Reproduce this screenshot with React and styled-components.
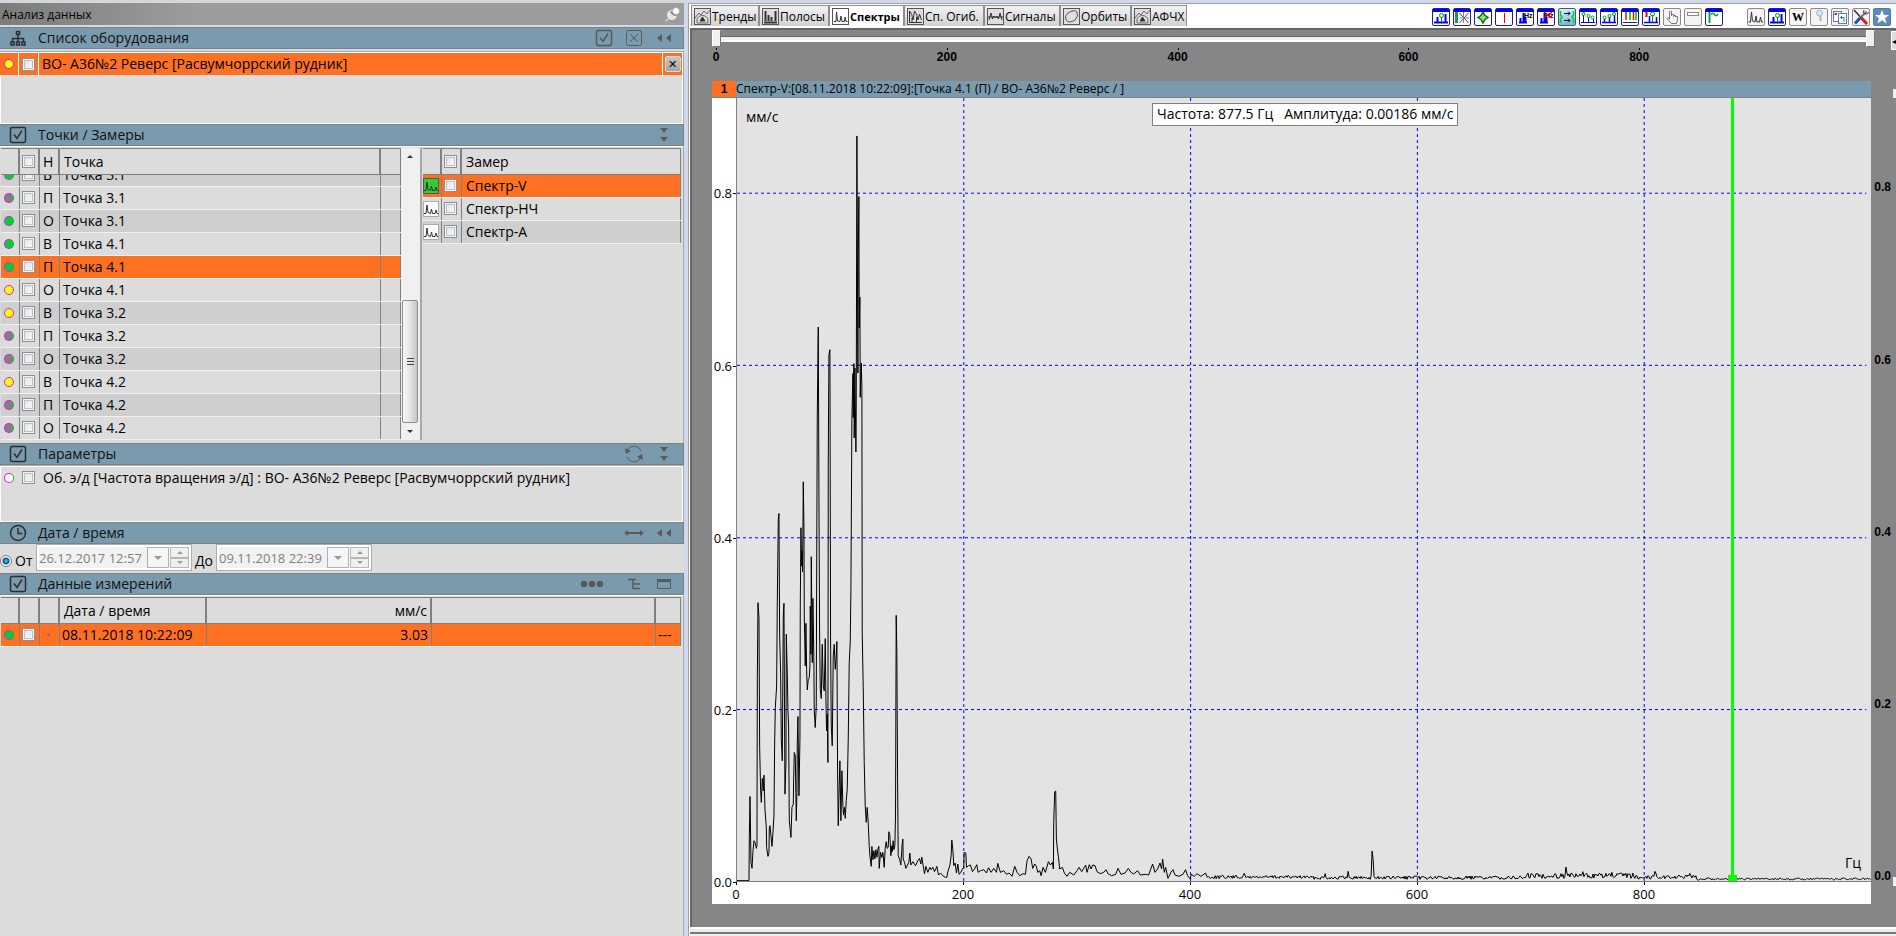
import React from 'react'
import styled, { createGlobalStyle, css } from 'styled-components'

const ORANGE = '#ff7122'
const BLUE = '#7a9bae'
const LINE = '#808080'
const PANEL = '#dcdcdc'
const STRIPE = '#cfcfcf'

const points = [
    { id: 1, dir: 'В', name: 'Точка 3.1', state: 'green' },
    { id: 2, dir: 'П', name: 'Точка 3.1', state: 'gray' },
    { id: 3, dir: 'О', name: 'Точка 3.1', state: 'green' },
    { id: 4, dir: 'В', name: 'Точка 4.1', state: 'green' },
    { id: 5, dir: 'П', name: 'Точка 4.1', state: 'green', active: true },
    { id: 6, dir: 'О', name: 'Точка 4.1', state: 'yellow' },
    { id: 7, dir: 'В', name: 'Точка 3.2', state: 'yellow' },
    { id: 8, dir: 'П', name: 'Точка 3.2', state: 'gray' },
    { id: 9, dir: 'О', name: 'Точка 3.2', state: 'gray' },
    { id: 10, dir: 'В', name: 'Точка 4.2', state: 'yellow' },
    { id: 11, dir: 'П', name: 'Точка 4.2', state: 'gray' },
    { id: 12, dir: 'О', name: 'Точка 4.2', state: 'gray' },
]

const measures = [
    { name: 'Спектр-V', active: true },
    { name: 'Спектр-НЧ' },
    { name: 'Спектр-А', striped: true },
]

const tabs = [
    { name: 'Тренды', icon: 'trend', width: 68 },
    { name: 'Полосы', icon: 'bars', width: 70 },
    { name: 'Спектры', icon: 'spectrum', width: 75, active: true },
    { name: 'Сп. Огиб.', icon: 'envelope', width: 80 },
    { name: 'Сигналы', icon: 'signal', width: 76 },
    { name: 'Орбиты', icon: 'orbit', width: 71 },
    { name: 'АФЧХ', icon: 'trend', width: 56 },
]

const tools = [
    'peak', 'cross', 'diamond', 'redline', 'hz', 'hzoff', 'harmonics', 'downs', 'ups',
    'bands', 'markers', 'hand', 'panel', 'flag',
]
const toolsRight = ['wave', 'peak', 'word', 'search', 'copy', 'wrench', 'star']

// x and y of every sample, the baseline is y = 1206
const samples = [
    109,1205, 145,1205, 146,1075, 148,952, 151,1150, 154,1168, 157,1115, 160,1085, 163,1090, 167,1108,
    169,1100, 170,600, 172,370, 175,415, 177,805, 180,935, 182,970, 185,898, 188,935, 190,888,
    193,990, 197,1045, 198,1105, 202,1132, 205,1120, 206,1050, 208,1040, 211,1070, 214,1102, 217,1060,
    220,1010, 222,800, 224,685, 228,620, 230,365, 233,120, 235,102, 237,465, 240,585, 242,780,
    245,845, 248,410, 250,372, 253,945, 256,850, 257,465, 260,585, 262,695, 264,740, 266,1025,
    271,1075, 274,985, 278,975, 279,905, 281,820, 284,830, 287,1025, 289,940, 290,795, 292,712,
    295,950, 298,780, 299,380, 301,145, 303,260, 305,215, 306,278, 308,7, 310,140, 311,410,
    314,560, 316,432, 318,570, 320,632, 323,600, 326,595, 328,560, 329,380, 331,525, 332,232,
    335,550, 337,357, 340,560, 341,695, 344,745, 347,680, 348,350, 350,-190, 353,-458, 355,40,
    357,455, 359,630, 362,658, 365,495, 368,620, 371,635, 374,478, 376,655, 378,755, 380,705,
    382,850, 383,-50, 385,-375, 388,-390, 390,485, 392,740, 395,800, 398,530, 401,495, 404,570,
    407,530, 409,487, 411,875, 413,1040, 416,920, 418,845, 421,1025, 424,875, 427,980, 429,1008,
    432,985, 434,1018, 437,965, 440,930, 443,780, 446,550, 449,490, 451,335, 454,-185, 457,-318,
    458,-185, 460,-348, 461,-125, 463,-335, 466,-83, 467,-207, 469,-1032, 472,-320, 473,-672, 475,-850,
    476,-455, 478,-548, 479,-247, 482,-350, 484,-280, 485,460, 488,625, 491,850, 494,980, 497,1030,
    500,985, 503,1030, 506,1100, 508,1130, 512,1162, 514,1102, 517,1142, 520,1115, 523,1140, 526,1112,
    529,1135, 532,1110, 535,1102, 536,1168, 540,1120, 544,1135, 547,1120, 551,1165, 554,1108, 557,1088,
    560,1108, 563,1105, 565,1058, 568,1070, 571,1130, 574,1100, 575,1118, 578,1085, 580,1112, 583,1100,
    585,1008, 587,408, 589,517, 591,870, 593,1130, 597,1140, 601,1158, 605,1095, 607,1080, 608,1140,
    612,1150, 616,1168, 620,1160, 625,1150, 628,1122, 631,1158, 637,1148, 645,1160, 652,1145, 657,1138,
    661,1155, 664,1134, 668,1160, 672,1184, 676,1162, 682,1180, 688,1165, 692,1172, 697,1165, 702,1178,
    706,1170, 709,1162, 714,1188, 720,1182, 727,1190, 735,1195, 739,1195, 742,1178, 748,1160, 752,1130,
    754,1083, 757,1110, 760,1160, 764,1152, 768,1182, 772,1155, 776,1186, 781,1180, 786,1170, 790,1165,
    791,1120, 796,1122, 798,1165, 804,1160, 810,1158, 816,1178, 822,1170, 829,1157, 833,1180, 840,1175,
    850,1172, 858,1182, 864,1166, 872,1180, 880,1168, 888,1180, 892,1153, 900,1180, 910,1175, 918,1186,
    926,1182, 935,1192, 943,1162, 950,1180, 958,1190, 968,1184, 975,1186, 980,1145, 986,1132, 992,1140,
    997,1168, 1003,1155, 1008,1162, 1012,1180, 1018,1175, 1022,1190, 1028,1165, 1035,1180, 1044,1148,
    1050,1158, 1056,1150, 1059,1170, 1060,1030, 1063,938, 1066,936, 1068,1080, 1071,1110, 1074,1132,
    1078,1170, 1086,1165, 1092,1182, 1100,1192, 1108,1180, 1120,1188, 1130,1175, 1136,1165, 1144,1178,
    1156,1158, 1160,1180, 1167,1157, 1172,1170, 1177,1158, 1184,1160, 1190,1178, 1200,1184, 1210,1180,
    1217,1172, 1224,1185, 1234,1190, 1246,1186, 1253,1168, 1262,1186, 1274,1182, 1284,1168, 1292,1180,
    1300,1185, 1312,1175, 1320,1188, 1335,1186, 1345,1188, 1357,1155, 1364,1180, 1372,1170, 1379,1152,
    1384,1170, 1387,1140, 1392,1180, 1396,1165, 1403,1198, 1412,1180, 1418,1172, 1424,1188, 1436,1192,
    1448,1186, 1456,1172, 1462,1190, 1470,1200, 1473,1186, 1482,1192, 1490,1184, 1502,1192, 1516,1182,
]

// the quiet part of the spectrum: floor level per range, and the few peaks that stand out
const floors = [
    [1830, 1194, 5],
    [2480, 1196, 5],
    [2800, 1190, 8],
    [2990, 1194, 6],
    [3514, 1200, 3],
]
const peaks = {
    1633: 1183, 1875: 1184, 1944: 1177, 2016: 1116, 2019: 1140, 2496: 1185, 2598: 1164, 2601: 1182,
    2649: 1178, 2736: 1180, 2865: 1177, 2868: 1182, 2971: 1183,
}

function buildPath () {
    let d = ''
    for (let i = 0; i < samples.length; i += 2) {
        d += `${ i ? 'L' : 'M' }${ samples[i] } ${ samples[i + 1] }`
    }
    let seed = 7
    for (let x = 1521; x < 3514; x += 3) {
        const [, level, swing] = floors.find(f => x < f[0])
        seed = (seed * 1103515245 + 12345) % 2147483648
        const noise = (seed / 2147483648 - 0.5) * 2 * swing
        const peak = peaks[x] || peaks[x + 1] || peaks[x + 2]
        d += `L${ x } ${ peak || Math.round(level + noise) }`
    }
    return d
}

const spectrumPath = buildPath()

/* ---------- icons ---------- */

function TabIcon ({ name }) {
    return (
        <svg width="17" height="17" viewBox="0 0 17 17" fill="none" stroke="#333">
            <rect x=".5" y=".5" width="16" height="16" fill={ name === 'spectrum' ? '#fff' : '#dedede' } stroke="#555" />
            { name === 'trend' && <>
                <path d="M1 10L5 5L7 7L10 3L13 6L16 2M3 15V12A5.5 4.5 0 0 1 14 12V15Z" stroke="#666" />
                <path d="M6 13H11L8.5 9Z" fill="#333" />
            </> }
            { name === 'bars' && <path d="M2 14.5H15M3.5 3V13M6.5 7V13M9.5 9V13M13.5 3V13" strokeWidth="2" /> }
            { name === 'spectrum' && <path d="M2 13.5H4L4.5 4L5.5 13L8 13.5L9 8L10 13.5H12.5L13 9L14 13.5H15.5" /> }
            { name === 'envelope' && <path d="M2.5 14V3Q5 5 6 12L7.5 3Q10 5 11 12L12.5 6L14.5 12M2 14.5H15M5 14V10M9.5 14V9" /> }
            { name === 'signal' && <path d="M1 9H16M2 12L4 5L5.5 11L7 8L8.5 10L10 8L11.5 11L13 5L15 12" /> }
            { name === 'orbit' && <path d="M3 12Q1 8 5 5Q11 1 14 4Q16 8 12 12Q6 16 3 12Z" stroke="#555" /> }
        </svg>
    )
}

function MeasureIcon ({ active }) {
    return (
        <svg width="16" height="16" viewBox="0 0 16 16" fill="none">
            <rect x=".5" y=".5" width="15" height="15" fill={ active ? '#33cc33' : '#fff' } stroke={ active ? '#555' : '#aaa' } />
            <path d="M1 12.5H3L4 4L5 11.5L7.5 12.5L8.5 8L9.5 12.5H12L13 9L14 12.5H15" stroke="#333" />
        </svg>
    )
}

const toolShapes = {
    peak: <><path d="M2 14.5H16M5.5 14V9M13.5 14V6" stroke="#0000ff" strokeWidth="2" /><path d="M9.5 14V9" stroke="#008000" /><circle cx="9.5" cy="7.5" r="2" stroke="#00a000" /></>,
    cross: <><path d="M3.5 4V15" stroke="#12a050" strokeWidth="3" /><path d="M6.5 5L15.5 15M15.5 5L6.5 15" stroke="#e01010" /><path d="M10.5 4V15M7 10H16" stroke="#30a0d0" /></>,
    diamond: <path d="M9 4L11 7.5L14 9.5L11 11.5L9 15L7 11.5L4 9.5L7 7.5Z" fill="#8fe08f" stroke="#007000" strokeWidth="1.5" />,
    redline: <path d="M9.5 5V15" stroke="#f00000" />,
    hz: <><path d="M3 14.5H11M4.5 14V10M7.5 14V5M9.5 14V9" stroke="#0000ff" strokeWidth="2" /><text x="8" y="10">Hz</text></>,
    hzoff: <><path d="M3 14.5H11M4.5 14V10M7.5 14V5M9.5 14V9" stroke="#0000ff" strokeWidth="2" /><text x="8" y="10">Hz</text><path d="M7 4L15 10M15 4L7 10" stroke="#f00000" strokeWidth="1.5" /></>,
    harmonics: <><path d="M2.5 3V7L4 9L2.5 11V15M15.5 3V7L14 9L15.5 11V15" stroke="#00d020" strokeWidth="1.5" /><path d="M6 5.5H12M10 3.5L12 5.5L10 7.5M6 12.5H12M10 10.5L12 12.5L10 14.5" stroke="#111" /></>,
    downs: <><path d="M2 14.5H16M4.5 14V7M9.5 14V9M14.5 14V11" stroke="#0000ff" /><circle cx="4.5" cy="6" r="1.5" stroke="#00a000" /><circle cx="9.5" cy="8" r="1.5" stroke="#00a000" /><circle cx="13.5" cy="9.5" r="1.5" stroke="#00a000" /></>,
    ups: <><path d="M2 14.5H16M4.5 14V11M9.5 14V9M14.5 14V7" stroke="#0000ff" strokeWidth="1.5" /><circle cx="4.5" cy="9.5" r="1.5" stroke="#00a000" /><circle cx="9.5" cy="8" r="1.5" stroke="#00a000" /><circle cx="14" cy="6" r="1.5" stroke="#00a000" /></>,
    bands: <><path d="M5 4V12M12.5 4V12" stroke="#e01010" strokeWidth="1.5" /><path d="M9 4V12M15 4V12" stroke="#20e020" strokeWidth="2" /><path d="M2 14.5H16" stroke="#202090" /></>,
    markers: <><path d="M2 14.5H16M7.5 14V8M14.5 14V9" stroke="#0000ff" strokeWidth="1.5" /><path d="M4.5 4V11" stroke="#f00000" strokeWidth="2" strokeDasharray="5 2" /><path d="M10.5 14V7" stroke="#00a000" /><circle cx="10.5" cy="6" r="2" stroke="#00a000" /></>,
    hand: <path d="M6.5 11V3.5Q7.5 2 8.5 3.5V8V6.5H10.5V8.5V7.5H12.5V9V8.5H14.5V12L13.5 15.5H8.5L4 10.5Q4.5 8.5 6.5 11" stroke="#777" />,
    panel: <rect x="3.5" y="4.5" width="11" height="3" fill="#fff" stroke="#888" />,
    flag: <><path d="M4.5 4V15" stroke="#12a050" strokeWidth="2" /><path d="M6 6.5Q8 4 9.5 6.5T13 6" stroke="#12a050" strokeWidth="1.5" /></>,
    wave: <path d="M1.5 14H3.5L4.5 4L5.5 13L8 14L9 8L10 14L12.5 14L13.5 9L14.5 14H16" stroke="#333" />,
    word: <text x="3" y="13" className="word">W</text>,
    search: <><circle cx="9.5" cy="5" r="3" fill="#d8e8fa" stroke="#9fb4d0" /><path d="M10.5 8V13" stroke="#9fb4d0" strokeWidth="2" /></>,
    copy: <><rect x="2.5" y="3.5" width="8" height="10" fill="#fff" stroke="#5580b0" /><path d="M3.5 6H6" stroke="#e02020" strokeWidth="2" /><rect x="7.5" y="5.5" width="8" height="10" fill="#fff" stroke="#5580b0" /><path d="M13 14V9.5H9.5M11 8L9.5 9.5L11 11" stroke="#2070d0" /></>,
    wrench: <><path d="M2 2L14 15" stroke="#333" strokeWidth="1.5" /><path d="M9 9.5L15 16" stroke="#d02020" strokeWidth="3" /><path d="M14.5 3.5L9 9" stroke="#777" strokeWidth="2" /><path d="M8 10L3 15.5" stroke="#1050c0" strokeWidth="3" /><path d="M12 2Q10 5 13 6Q16 7 16.5 4" stroke="#444" /></>,
    star: <path d="M9 2L11 7H16L12 10.2L13.5 15.5L9 12.3L4.5 15.5L6 10.2L2 7H7Z" fill="#fff" />,
}

function HeadIcon ({ name }) {
    return (
        <svg width="18" height="18" viewBox="0 0 18 18" fill="none" stroke="currentColor">
            { name === 'tree' && <path d="M7.5 2.5H10.5V5.5H7.5ZM2 13H5V16H2ZM7.5 13H10.5V16H7.5ZM13 13H16V16H13ZM9 6V13M3.5 13V9.5H14.5V13" strokeWidth="1.5" /> }
            { name === 'check' && <><rect x="1.5" y="1.5" width="15" height="15" rx="1.5" strokeWidth="1.5" /><path d="M5 8.5L8 12.5L13 4.5" strokeWidth="1.5" /></> }
            { name === 'close' && <><rect x="1.5" y="1.5" width="15" height="15" rx="2" /><path d="M5 5L13 13M13 5L5 13" /></> }
            { name === 'clock' && <><circle cx="9" cy="9" r="7.5" strokeWidth="1.5" /><path d="M9 4V9.5H13.5" strokeWidth="1.5" /></> }
            { name === 'left' && <path d="M7 5V13L2 9ZM16 5V13L11 9Z" fill="currentColor" stroke="none" /> }
            { name === 'down' && <path d="M5 2H13L9 7ZM5 11H13L9 16Z" fill="currentColor" stroke="none" /> }
            { name === 'refresh' && <><path d="M2.5 5A7.5 7.5 0 0 1 16 6M15.5 13A7.5 7.5 0 0 1 2 12" /><path d="M0 3L6 6L1 9ZM18 15L12 12L17 9Z" fill="currentColor" stroke="none" /></> }
            { name === 'width' && <><path d="M2 9H16" strokeWidth="2" /><path d="M-1 9L3 6V12ZM19 9L15 6V12Z" fill="currentColor" stroke="none" /></> }
            { name === 'list' && <path d="M3 4.5H11M8 9H15M8 13.5H15M8 5V14" strokeWidth="1.5" /> }
            { name === 'window' && <><rect x="2.5" y="4.5" width="13" height="9" /><path d="M2 6H16" strokeWidth="2" /></> }
        </svg>
    )
}

/* ---------- blocks ---------- */

function SectionHead ({ icon, title, actions = [], dots }) {
    return (
        <Head>
            <HeadIcon name={ icon } />
            <HeadTitle>{ title }</HeadTitle>
            { dots && 
                <IconButton $wide aria-label="Ещё">
                    <svg width="24" height="8" viewBox="0 0 24 8" fill="currentColor">
                        <circle cx="4" cy="4" r="3.3" /><circle cx="12" cy="4" r="3.3" /><circle cx="20" cy="4" r="3.3" />
                    </svg>
                </IconButton>
            }
            { actions.map(name => (
                <IconButton key={ name } aria-label={ name }><HeadIcon name={ name } /></IconButton>
            )) }
        </Head>
    )
}

function DateField ({ label, value }) {
    return (
        <>
            <DateLabel htmlFor={ label }>{ label }</DateLabel>
            <DateWrap>
                <DateInput id={ label } defaultValue={ value } disabled />
                <DropButton disabled aria-label="Календарь"><Arrow $down /></DropButton>
                <Spin>
                    <SpinButton disabled aria-label="Больше"><Arrow $small /></SpinButton>
                    <SpinButton disabled aria-label="Меньше"><Arrow $small $down /></SpinButton>
                </Spin>
            </DateWrap>
        </>
    )
}

function ToolIcon ({ name }) {
    return (
        <Tool $name={ name } aria-label={ name }>
            <svg width="18" height="18" viewBox="0 0 18 18" fill="none">{ toolShapes[name] }</svg>
        </Tool>
    )
}

function SidePanel () {
    return (
        <Side>
            <TitleBar>
                <span>Анализ данных</span>
                <svg width="15" height="15" viewBox="0 0 15 15">
                    <path d="M1 14L5 10" stroke="#ddd" strokeWidth="1.5" />
                    <circle cx="7" cy="8" r="5.5" fill="#e6e6e6" stroke="#777" strokeWidth=".5" />
                    <path d="M5 4Q6 9 12 9L10 5Z" fill="#888" />
                    <circle cx="11" cy="4" r="3.5" fill="#fff" stroke="#888" strokeWidth=".5" />
                </svg>
            </TitleBar>

            <SectionHead icon="tree" title="Список оборудования" actions={ ['check', 'close', 'left'] } />
            <Box $height={ 73 } $gap={ 2 }>
                <EquipmentRow>
                    <Mark><Dot $state="yellow" /></Mark>
                    <Mark><Check aria-label="Оборудование" /></Mark>
                    <RowText>ВО- А36№2 Реверс [Расвумчоррский рудник]</RowText>
                    <Mark><CloseButton aria-label="Закрыть">✕</CloseButton></Mark>
                </EquipmentRow>
            </Box>

            <SectionHead icon="check" title="Точки / Замеры" actions={ ['down'] } />
            <Split>
                <PointsTable>
                    <thead>
                        <tr>
                            <th></th>
                            <th><Check aria-label="Все точки" /></th>
                            <th>Н</th>
                            <th>Точка</th>
                            <th></th>
                        </tr>
                    </thead>
                    <tbody>
                        { points.map((p, i) => (
                            <Row key={ p.id } $active={ p.active } $striped={ i % 2 === 0 }>
                                <td><Dot $state={ p.state } /></td>
                                <td><Check aria-label={ p.name } /></td>
                                <td>{ p.dir }</td>
                                <td>{ p.name }</td>
                                <td></td>
                            </Row>
                        )) }
                    </tbody>
                </PointsTable>
                <Scrollbar>
                    <ScrollArrow aria-label="Вверх"><Arrow $small $dark /></ScrollArrow>
                    <ScrollSpace />
                    <ScrollThumb><i /><i /><i /></ScrollThumb>
                    <ScrollArrow aria-label="Вниз"><Arrow $small $dark $down /></ScrollArrow>
                </Scrollbar>
                <MeasureTable>
                    <thead>
                        <tr>
                            <th></th>
                            <th><Check aria-label="Все замеры" /></th>
                            <th>Замер</th>
                        </tr>
                    </thead>
                    <tbody>
                        { measures.map(m => (
                            <Row key={ m.name } $active={ m.active } $striped={ m.striped }>
                                <td><MeasureIcon active={ m.active } /></td>
                                <td><Check aria-label={ m.name } /></td>
                                <td>{ m.name }</td>
                            </Row>
                        )) }
                    </tbody>
                </MeasureTable>
            </Split>

            <SectionHead icon="check" title="Параметры" actions={ ['refresh', 'down'] } />
            <Box $height={ 57 } $gap={ 0 }>
                <ParamRow>
                    <Mark><Dot $state="white" /></Mark>
                    <Mark><Check id="param" /></Mark>
                    <label htmlFor="param">Об. э/д [Частота вращения э/д] : ВО- А36№2 Реверс [Расвумчоррский рудник]</label>
                </ParamRow>
            </Box>

            <SectionHead icon="clock" title="Дата / время" actions={ ['width', 'left'] } />
            <DateRow>
                <Radio defaultChecked aria-label="Период" />
                <DateField label="От" value="26.12.2017 12:57" />
                <DateField label="До" value="09.11.2018 22:39" />
            </DateRow>

            <SectionHead icon="check" title="Данные измерений" dots actions={ ['list', 'window'] } />
            <DataBox>
                <DataTable>
                    <thead>
                        <tr>
                            <th></th>
                            <th></th>
                            <th></th>
                            <th>Дата / время</th>
                            <th>мм/с</th>
                            <th></th>
                            <th></th>
                        </tr>
                    </thead>
                    <tbody>
                        <Row $active>
                            <td><Dot $state="green" /></td>
                            <td><Check aria-label="08.11.2018 10:22:09" /></td>
                            <td><Bullet /></td>
                            <td>08.11.2018 10:22:09</td>
                            <td>3.03</td>
                            <td></td>
                            <td>---</td>
                        </Row>
                    </tbody>
                </DataTable>
            </DataBox>
        </Side>
    )
}

function Chart () {
    return (
        <ChartGrid>
            <ChartHead>
                <ChartNumber>1</ChartNumber>
                <span>Спектр-V:[08.11.2018 10:22:09]:[Точка 4.1 (П) / ВО- А36№2 Реверс / ]</span>
            </ChartHead>
            <EdgeCell><EdgeThumb /></EdgeCell>

            <AxisY>
                { ['0.8', '0.6', '0.4', '0.2', '0.0'].map(v => <span key={ v }>{ v }</span>) }
            </AxisY>
            <Plot>
                <svg viewBox="109 -1146 3405 2352" preserveAspectRatio="none">
                    <g stroke="#0000ff" strokeDasharray="3 3">
                        { [-860, -343, 175, 691].map(y => <line key={ y } x1="109" x2="3500" y1={ y } y2={ y } />) }
                        { [790, 1471, 2152, 2833].map(x => <line key={ x } x1={ x } x2={ x } y1="-1146" y2="1206" />) }
                    </g>
                    <path d={ spectrumPath } stroke="#000" fill="none" />
                    <line x1="3097" x2="3097" y1="-1146" y2="1200" stroke="#00ff00" className="cursor" />
                    <rect x="3084" y="1187" width="27" height="18" fill="#00ff00" />
                </svg>
                <PlotText>мм/с</PlotText>
                <PlotText $bottom>Гц</PlotText>
                <Hint>Частота: 877.5 Гц&nbsp;&nbsp; Амплитуда: 0.00186 мм/с</Hint>
            </Plot>
            <EdgeScale>
                { ['0.8', '0.6', '0.4', '0.2', '0.0'].map(v => <span key={ v }>{ v }</span>) }
            </EdgeScale>

            <AxisX>
                { ['0', '200', '400', '600', '800'].map(v => <span key={ v }>{ v }</span>) }
            </AxisX>
        </ChartGrid>
    )
}

function App () {
    return (
        <Page>
            <GlobalStyle />
            <SidePanel />
            <Main>
                <TopBar>
                    <nav>
                        { tabs.map(t => (
                            <Tab key={ t.name } $active={ t.active } $width={ t.width }>
                                <TabIcon name={ t.icon } />{ t.name }
                            </Tab>
                        )) }
                    </nav>
                    <Tools>
                        { tools.map(name => <ToolIcon key={ name } name={ name } />) }
                    </Tools>
                    <Tools>
                        { toolsRight.map(name => <ToolIcon key={ name } name={ name } />) }
                    </Tools>
                </TopBar>
                <Workspace>
                    <SliderRow>
                        <Slider>
                            <Range aria-label="От, Гц" max="1000" defaultValue="0" />
                            <Range aria-label="До, Гц" max="1000" defaultValue="1000" />
                        </Slider>
                        <SliderScale>
                            { ['0', '200', '400', '600', '800'].map(v => <span key={ v }>{ v }</span>) }
                        </SliderScale>
                        <EdgeButton aria-label="Сдвиг">◂</EdgeButton>
                    </SliderRow>
                    <Chart />
                </Workspace>
                <BottomEdge />
            </Main>
        </Page>
    )
}

export default App

const GlobalStyle = createGlobalStyle`
    * {
        box-sizing: border-box;
    }
    body {
        margin: 0;
        overflow: hidden;
        font-family: "Open Sans", "Noto Sans", sans-serif;
        font-size: 14px;
        color: #000;
    }
    button, input {
        font: inherit;
        color: inherit;
        margin: 0;
        padding: 0;
    }
`

const Page = styled.div`
    display: flex;
    height: 100vh;
    background: #d2d8ec;
`

const Side = styled.aside`
    flex: 0 0 684px;
    display: flex;
    flex-direction: column;
    border-top: 2px solid #d6d6d6;
    padding-top: 1px;
`

const TitleBar = styled.header`
    height: 22px;
    margin-bottom: 2px;
    padding: 0 4px 0 2px;
    display: flex;
    align-items: center;
    justify-content: space-between;
    font-size: 12px;
    background: linear-gradient(90deg, #7c7c7c, #9d9d9d 200px);
`

const Head = styled.div`
    flex: none;
    height: 22px;
    padding: 0 9px;
    display: flex;
    align-items: center;
    gap: 10px;
    background: ${ BLUE };
    border: 1px solid ${ LINE };
    border-left: 0;
    color: #2b2f33;
`

const HeadTitle = styled.h2`
    flex: 1;
    margin: 0;
    padding: 0 0 2px 1px;
    font-size: 14px;
    font-weight: 400;
    color: #111;
`

const IconButton = styled.button`
    width: ${ props => props.$wide ? '34px' : '20px' };
    height: 20px;
    display: flex;
    align-items: center;
    justify-content: ${ props => props.$wide ? 'flex-start' : 'center' };
    border: 0;
    background: none;
    color: #5a5a5a;

    svg {
        overflow: visible;
    }
`

const Box = styled.div`
    flex: none;
    height: ${ props => props.$height }px;
    margin-top: ${ props => props.$gap }px;
    padding: 1px 1px 1px 0;
    background: ${ PANEL };
    border: 1px solid #a8a8a8;
    border-width: 1px 1px 0 0;
    box-shadow: inset 0 0 0 1px #fff;
`

const EquipmentRow = styled.div`
    height: 22px;
    display: grid;
    grid-template-columns: 18px 19px 1fr 19px;
    column-gap: 1px;
    background: #fff;

    > * {
        background: ${ ORANGE };
    }
`

const Mark = styled.div`
    display: flex;
    align-items: center;
    justify-content: center;
`

const RowText = styled.div`
    padding-left: 3px;
    line-height: 21px;
`

const ParamRow = styled.div`
    height: 21px;
    display: grid;
    grid-template-columns: 18px 20px 1fr;
    align-items: center;

    label {
        padding-left: 5px;
        line-height: 20px;
    }
`

const dotColors = { green: '#00d030', yellow: '#ffff00', gray: '#808080', white: '#ffffff' }

const Dot = styled.span`
    width: 10px;
    height: 10px;
    border-radius: 50%;
    background: ${ props => dotColors[props.$state] };
    border: 1px solid #e020e0;
    border-right-color: ${ props => props.$state === 'yellow' ? '#e020e0' : '#00c040' };
`

const Check = styled.input.attrs({ type: 'checkbox' })`
    appearance: none;
    flex: none;
    width: 13px;
    height: 13px;
    border: 1px solid #8e8f8f;
    background: linear-gradient(135deg, #dfe1e3, #fbfbfb);
    box-shadow: inset 0 0 0 1px #f4f4f4, inset 0 0 0 2px #bcc0c4;
`

const CloseButton = styled.button`
    width: 16px;
    height: 16px;
    border: 1px solid #d8d8d8;
    border-radius: 2px;
    background: linear-gradient(#c8c8c8, #a4a4a4);
    font-size: 11px;
    line-height: 12px;
`

const Split = styled.div`
    flex: none;
    height: 297px;
    display: grid;
    grid-template-columns: 400px 19px 1fr;
    padding: 1px 2px 3px 1px;
    background: ${ PANEL };
    border-top: 1px solid #fff;
    border-right: 1px solid #a8a8a8;
`

const Row = styled.tr`
    background: ${ props => props.$active ? ORANGE : props.$striped ? STRIPE : PANEL };
    border-bottom: 1px solid #f0f0f0;
`

const tableBase = css`
    display: flex;
    flex-direction: column;
    min-height: 0;

    tr {
        display: grid;
        flex: none;
    }
    thead tr {
        height: 27px;
        border-top: 1px solid ${ LINE };
        border-bottom: 1px solid ${ LINE };
    }
    tbody {
        display: flex;
        flex-direction: column;
        min-height: 0;
        overflow: hidden;
    }
    tbody tr {
        height: 23px;
    }
    th, td {
        display: flex;
        align-items: center;
        padding: 0 0 1px 2px;
        border-right: 1px solid ${ LINE };
        font-weight: 400;
        white-space: nowrap;
    }
    th {
        border-right-width: 2px;
    }
    th:last-child {
        border-right-width: 1px;
    }
`

const PointsTable = styled.table`
    ${ tableBase }

    tr {
        grid-template-columns: 19px 20px 20px 1fr 20px;
    }
    tbody {
        flex: 1;
        justify-content: flex-end;
    }
    td:first-child {
        padding-left: 3px;
    }
    th:nth-child(3), td:nth-child(3) {
        padding-left: 3px;
    }
    th:nth-child(4) {
        padding-left: 4px;
    }
    td:nth-child(4) {
        padding-left: 3px;
    }
`

const MeasureTable = styled.table`
    ${ tableBase }
    border-left: 2px solid #a8a8a8;
    padding-left: 1px;

    tr {
        grid-template-columns: 19px 20px 1fr;
    }
    td:first-child {
        padding-left: 0;
    }
    th:nth-child(3), td:nth-child(3) {
        padding-left: 4px;
    }
`

const Scrollbar = styled.div`
    display: flex;
    flex-direction: column;
    background: #f0f0f0;
    padding: 0 2px 0 1px;
`

const ScrollArrow = styled.button`
    height: 17px;
    display: flex;
    align-items: center;
    justify-content: center;
    border: 0;
    background: none;
`

const ScrollSpace = styled.div`
    flex: 1;
`

const ScrollThumb = styled.div`
    height: 123px;
    display: flex;
    flex-direction: column;
    align-items: center;
    justify-content: center;
    gap: 2px;
    border: 1px solid #8e8e8e;
    border-radius: 2px;
    background: linear-gradient(90deg, #f6f6f6, #e6e6e8 50%, #c4c4ca);

    i {
        width: 7px;
        height: 1px;
        background: #444;
    }
`

const Arrow = styled.i`
    width: 0;
    height: 0;
    border: solid transparent;
    border-width: ${ props => props.$small ? '0 3px 3px' : '0 4px 4px' };
    border-bottom-color: ${ props => props.$dark ? '#333' : '#999' };
    transform: ${ props => props.$down ? 'rotate(180deg)' : 'none' };
`

const DateRow = styled.div`
    flex: none;
    height: 29px;
    display: flex;
    align-items: flex-start;
    background: ${ PANEL };
`

const Radio = styled.input.attrs({ type: 'radio' })`
    appearance: none;
    width: 12px;
    height: 12px;
    margin-top: 11px;
    border: 1px solid #7a7a7a;
    border-radius: 50%;
    background: radial-gradient(circle, #30b0f0 1px, #14436e 3px, #fff 4px);
`

const DateLabel = styled.label`
    width: 24px;
    padding-left: 3px;
    line-height: 33px;
`

const DateWrap = styled.div`
    width: 156px;
    height: 27px;
    display: flex;
    padding: 2px;
    border: 1px solid #acacac;
    background: #fff;
`

const DateInput = styled.input`
    flex: 1;
    min-width: 0;
    border: 0;
    background: #f2f2f2;
    color: #808080;
    font-size: 13px;
`

const DropButton = styled.button`
    width: 22px;
    display: flex;
    align-items: center;
    justify-content: center;
    border: 1px solid #b0b0b0;
    background: #f6f6f6;
`

const Spin = styled.div`
    width: 19px;
    margin-left: 1px;
    display: flex;
    flex-direction: column;
`

const SpinButton = styled.button`
    flex: 1;
    display: flex;
    align-items: center;
    justify-content: center;
    border: 1px solid #b8b8b8;
    background: #f0f0f0;
`

const DataBox = styled.div`
    flex: 1;
    padding: 1px 2px 0 1px;
    background: ${ PANEL };
    border-top: 1px solid #fff;
    border-right: 1px solid #a8a8a8;
`

const DataTable = styled.table`
    ${ tableBase }

    tr {
        grid-template-columns: 19px 20px 20px 147px 225px 1fr 25px;
    }
    td:first-child {
        padding-left: 3px;
    }
    th:nth-child(4) {
        padding-left: 4px;
    }
    th:nth-child(5), td:nth-child(5) {
        justify-content: flex-end;
        padding-right: 3px;
    }
`

const Bullet = styled.i`
    width: 3px;
    height: 3px;
    margin-left: 5px;
    border-radius: 50%;
    background: #b06040;
`

const Main = styled.main`
    flex: 1;
    min-width: 0;
    display: flex;
    flex-direction: column;
    margin: 3px 0 0 4px;
    padding-left: 1px;
    border: 1px solid #a0a0a0;
    border-width: 1px 0 0 1px;
    background: #fff;
`

const TopBar = styled.div`
    flex: none;
    height: 24px;
    display: flex;
    align-items: center;
    gap: 24px;
    padding: 1px 5px 0 1px;

    nav {
        flex: 1;
        display: flex;
        height: 21px;
        align-self: flex-start;
    }
`

const Tab = styled.button`
    width: ${ props => props.$width }px;
    flex: none;
    display: flex;
    align-items: center;
    gap: 1px;
    padding-left: 2px;
    white-space: nowrap;
    border: 1px solid #8c8e94;
    border-width: 1px 1px 0 1px;
    background: linear-gradient(#f2f2f2, #d2d2d2);
    font-size: 12px;

    ${ props => props.$active && css`
        background: #fff;
        font-size: 11px;
        font-weight: 700;
    ` }
`

const Tools = styled.div`
    display: flex;
    gap: 3px;
`

const blueTools = ['peak', 'cross', 'diamond', 'redline', 'hz', 'hzoff', 'downs', 'ups', 'bands', 'markers', 'flag']

const Tool = styled.button`
    width: 18px;
    height: 18px;
    display: flex;
    align-items: center;
    justify-content: center;
    border: 1px solid #8a8a8a;
    border-radius: 2px;
    background: #f4f4f4;

    svg {
        flex: none;
    }
    text {
        fill: #000;
        font: 700 7px "Liberation Sans", sans-serif;
    }
    .word {
        font: 700 12px "Liberation Serif", serif;
    }

    ${ props => blueTools.includes(props.$name) && css`
        border: 1px solid #20208c;
        background: linear-gradient(#0000ff 3px, #fff 3px);
    ` }
    ${ props => props.$name === 'harmonics' && css`
        border-color: #2c628b;
        background: linear-gradient(#d6eef8, #7cb8d8);
    ` }
    ${ props => props.$name === 'star' && css`
        border-color: #4a7cab;
        background: #5b8cbc;
    ` }
`

const Workspace = styled.div`
    flex: 1;
    min-height: 0;
    display: flex;
    flex-direction: column;
    padding: 0 0 23px 20px;
    border: solid #666;
    border-width: 2px 0 0 2px;
    background: #868686;
`

const SliderRow = styled.div`
    flex: none;
    height: 51px;
    position: relative;
    padding-right: 21px;
`

const Slider = styled.div`
    height: 17px;
    position: relative;
    background: linear-gradient(#868686 6px, #666 6px, #666 7px, #f0f0f0 7px, #f0f0f0 10px, #fff 10px, #fff 12px, #868686 12px);
`

const Range = styled.input.attrs({ type: 'range' })`
    appearance: none;
    position: absolute;
    inset: 0;
    width: 100%;
    height: 17px;
    background: none;
    pointer-events: none;

    &::-webkit-slider-thumb {
        appearance: none;
        width: 9px;
        height: 17px;
        border: 1px solid #fff;
        border-right-color: #777;
        border-bottom-color: #777;
        background: #f0f0f0;
        pointer-events: auto;
    }
`

const SliderScale = styled.div`
    display: grid;
    grid-template-columns: repeat(5, 1fr);
    padding: 1px 5px 0 4px;
    font: 700 12px/14px "Liberation Sans", sans-serif;

    span {
        width: 50px;
        margin-left: -25px;
        text-align: center;
        border-top: 2px solid transparent;
        border-image: linear-gradient(90deg, transparent 25px, #000 25px, #000 26px, transparent 26px) 2;
    }
`

const EdgeButton = styled.button`
    position: absolute;
    right: 0;
    top: 1px;
    width: 5px;
    height: 19px;
    overflow: hidden;
    border: 1px solid #fff;
    border-right: 0;
    background: #ddd;
    font-size: 8px;
`

const ChartGrid = styled.div`
    flex: 1;
    min-height: 0;
    display: grid;
    grid-template-columns: 24px 1fr 25px;
    grid-template-rows: 17px 1fr 22px;
`

const ChartHead = styled.div`
    grid-column: 1 / 3;
    display: flex;
    align-items: center;
    background: ${ BLUE };
    border-bottom: 1px solid ${ LINE };
    font-size: 12px;
    line-height: 16px;
    white-space: nowrap;
`

const ChartNumber = styled.b`
    width: 24px;
    text-align: center;
    background: ${ ORANGE };
    font-family: "Liberation Sans", sans-serif;
`

const EdgeCell = styled.div`
    display: flex;
    justify-content: flex-end;
    align-items: flex-end;
`

const EdgeThumb = styled.span`
    width: 3px;
    height: 9px;
    background: #f0f0f0;
`

const yRows = css`
    position: relative;
    display: grid;
    grid-template-rows: 95fr 173fr 172fr 172fr 172fr;
    justify-items: end;
    align-items: end;
`

const AxisY = styled.div`
    ${ yRows }
    background: #fff;
    font-size: 13px;

    span {
        display: flex;
        align-items: center;
        gap: 1px;
        height: 20px;
        margin-bottom: -10px;
    }
    span::after {
        content: '';
        width: 3px;
        height: 1px;
        background: #000;
    }
`

const Plot = styled.div`
    position: relative;
    min-height: 0;
    background: #e3e3e3;
    border-left: 1px solid ${ LINE };
    border-bottom: 1px solid ${ LINE };

    svg {
        position: absolute;
        width: 100%;
        height: 100%;
        shape-rendering: crispEdges;
    }
    line, path {
        vector-effect: non-scaling-stroke;
    }
    .cursor {
        stroke-width: 3px;
    }
`

const PlotText = styled.span`
    position: absolute;
    ${ props => props.$bottom ? 'right: 10px; bottom: 9px;' : 'left: 9px; top: 9px;' }
`

const Hint = styled.div`
    position: absolute;
    left: 415px;
    top: 5px;
    height: 23px;
    padding: 0 4px;
    line-height: 20px;
    white-space: nowrap;
    background: #fff;
    border: 1px solid ${ LINE };
`

const EdgeScale = styled.div`
    ${ yRows }
    padding-right: 5px;
    font: 700 12px/12px "Liberation Sans", sans-serif;

    &::after {
        content: '';
        position: absolute;
        right: 0;
        bottom: -4px;
        width: 3px;
        height: 9px;
        background: #f0f0f0;
    }
`

const AxisX = styled.div`
    grid-column: 1 / 3;
    display: grid;
    grid-template-columns: repeat(5, 1fr);
    padding-left: 24px;
    background: #fff;

    span {
        width: 60px;
        margin-left: -30px;
        padding-top: 3px;
        font-size: 13px;
        line-height: 19px;
        text-align: center;
        background: linear-gradient(#000, #000) 30px 0 / 1px 3px no-repeat;
    }
`

const BottomEdge = styled.div`
    flex: none;
    height: 9px;
    border-top: 2px solid #fff;
    background: linear-gradient(#ececec 3px, #777 3px, #777 5px, #f0f0f0 5px);
`
